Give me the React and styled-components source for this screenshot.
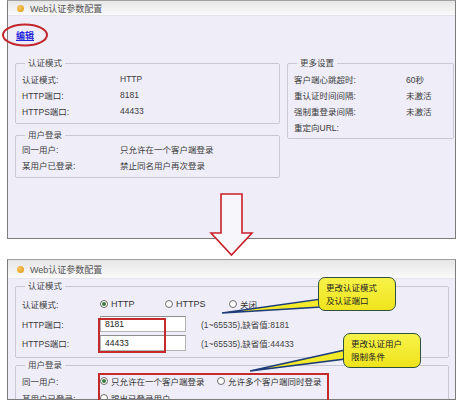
import React from 'react';
import styled, { createGlobalStyle } from 'styled-components';

const GlobalStyle = createGlobalStyle`
  html, body {
    margin: 0;
    padding: 0;
    background: #ffffff;
  }
  body {
    font-family: 'Liberation Sans', 'Noto Sans CJK SC', sans-serif;
    font-size: 8.5px;
    color: #3a3a3a;
  }
`;

const Page = styled.div`
  position: relative;
  width: 458px;
  height: 400px;
  overflow: hidden;
  background: #ffffff;
`;

const Panel = styled.section`
  box-sizing: border-box;
  width: 449px;
  height: ${(p) => p.$h}px;
  margin: ${(p) => p.$top}px 0 0 7px;
  border: 1px solid #7c7c7c;
  border-top-color: #a0a0a0;
  background: #efeef8;
  overflow: hidden;
`;

const TitleBar = styled.div`
  display: flex;
  align-items: center;
  gap: 6px;
  height: ${(p) => p.$h}px;
  padding-left: 9px;
  background: linear-gradient(#e6e6e6, #fafafa);
  border-bottom: 1px solid #e4e4ea;
  color: #555;
  font-size: 9px;
`;

const Dot = styled.span`
  width: 7px;
  height: 7px;
  border-radius: 50%;
  background: radial-gradient(circle at 35% 35%, #f6c45a, #e09a1a);
`;

const Body = styled.div`
  padding: 0 0 0 7px;
`;

const EditRow = styled.div`
  padding-top: 14px;
  height: 12px;
  line-height: 12px;
  padding-left: 1px;
`;

const EditLink = styled.a`
  color: #2424d8;
  text-decoration: underline;
  font-weight: bold;
  font-size: 9px;
`;

const Columns = styled.div`
  display: flex;
  gap: 7px;
  margin-top: ${(p) => p.$mt}px;
  align-items: flex-start;
`;

const Column = styled.div`
  display: flex;
  flex-direction: column;
  width: ${(p) => p.$w}px;
`;

const Group = styled.fieldset`
  box-sizing: border-box;
  width: ${(p) => p.$w || 265}px;
  margin: ${(p) => p.$mt || 0}px 0 0 0;
  padding: ${(p) => p.$pt ?? 2}px 0 ${(p) => p.$pb || 4}px 6px;
  border: 1px solid #c8c8d2;
  border-radius: 2px;
`;

const Legend = styled.legend`
  margin-left: 3px;
  padding: 0 3px;
  height: 12px;
  line-height: 12px;
  color: #444;
  font-size: 8.5px;
`;

const Row = styled.div`
  display: flex;
  align-items: center;
  height: ${(p) => p.$h || 16}px;
`;

const Label = styled.span`
  width: ${(p) => p.$w}px;
  flex-shrink: 0;
  white-space: nowrap;
`;

const Value = styled.span`
  white-space: nowrap;
`;

const RadioItem = styled.label`
  display: flex;
  align-items: center;
  gap: 3px;
  width: ${(p) => p.$w}px;
  white-space: nowrap;
  color: #333;
  font-size: ${(p) => (p.$latin ? 9 : 8.5)}px;
`;

const RadioCircle = styled.span`
  box-sizing: border-box;
  display: flex;
  align-items: center;
  justify-content: center;
  width: 8px;
  height: 8px;
  border-radius: 50%;
  border: 1px solid #6e6e6e;
  background: #fff;
  &::after {
    content: '';
    width: 4px;
    height: 4px;
    border-radius: 50%;
    background: ${(p) => (p.$on ? '#3f7a3f' : 'transparent')};
  }
`;

const TextBox = styled.div`
  box-sizing: border-box;
  width: 86px;
  height: 16px;
  padding-left: 4px;
  line-height: 14px;
  border: 1px solid #b4b4b4;
  border-top-color: #8e8e8e;
  background: #fff;
  color: #222;
  font-size: 8.5px;
`;

const Hint = styled.span`
  margin-left: 15px;
  white-space: nowrap;
  color: #444;
`;

const RedBox = styled.div`
  position: absolute;
  left: ${(p) => p.$x}px;
  top: ${(p) => p.$y}px;
  width: ${(p) => p.$w}px;
  height: ${(p) => p.$h}px;
  border: 2px solid #c42a2a;
  box-sizing: border-box;
`;

const Callout = styled.div`
  position: absolute;
  box-sizing: border-box;
  left: ${(p) => p.$x}px;
  top: ${(p) => p.$y}px;
  width: ${(p) => p.$w}px;
  height: ${(p) => p.$h}px;
  padding: 4px 0 0 7px;
  border: 1.5px solid #30503c;
  border-radius: 7px;
  background: linear-gradient(#f7f24a, #efe41c);
  color: #222;
  font-size: 8.5px;
  line-height: 13px;
`;

const Overlay = styled.svg`
  position: absolute;
  left: 0;
  top: 0;
  pointer-events: none;
`;

const Radio = ({ on, w, latin, children }) => (
  <RadioItem $w={w} $latin={latin}>
    <RadioCircle $on={on} />
    {children}
  </RadioItem>
);

const topMode = [
  ['认证模式:', 'HTTP'],
  ['HTTP端口:', '8181'],
  ['HTTPS端口:', '44433'],
];

const topLogin = [
  ['同一用户:', '只允许在一个客户端登录'],
  ['某用户已登录:', '禁止同名用户再次登录'],
];

const more = [
  ['客户端心跳超时:', '60秒'],
  ['重认证时间间隔:', '未激活'],
  ['强制重登录间隔:', '未激活'],
  ['重定向URL:', ''],
];

export default function App() {
  return (
    <>
      <GlobalStyle />
      <Page>
        <Panel $h={239} $top={0}>
          <TitleBar $h={14}>
            <Dot />
            Web认证参数配置
          </TitleBar>
          <Body>
            <EditRow>
              <EditLink href="#">编辑</EditLink>
            </EditRow>
            <Columns $mt={15}>
              <Column $w={265}>
                <Group>
                  <Legend>认证模式</Legend>
                  {topMode.map(([k, v]) => (
                    <Row key={k}>
                      <Label $w={98}>{k}</Label>
                      <Value>{v}</Value>
                    </Row>
                  ))}
                </Group>
                <Group $mt={5} $pt={0}>
                  <Legend>用户登录</Legend>
                  {topLogin.map(([k, v]) => (
                    <Row key={k}>
                      <Label $w={98}>{k}</Label>
                      <Value>{v}</Value>
                    </Row>
                  ))}
                </Group>
              </Column>
              <Column $w={167}>
                <Group $w={167} $pb={3}>
                  <Legend>更多设置</Legend>
                  {more.map(([k, v]) => (
                    <Row key={k}>
                      <Label $w={112}>{k}</Label>
                      <Value>{v}</Value>
                    </Row>
                  ))}
                </Group>
              </Column>
            </Columns>
          </Body>
        </Panel>

        <Panel $h={141} $top={20}>
          <TitleBar $h={18}>
            <Dot />
            Web认证参数配置
          </TitleBar>
          <Body>
            <Group $w={434} $mt={1} $pb={5}>
              <Legend>认证模式</Legend>
              <Row $h={20}>
                <Label $w={78}>认证模式:</Label>
                <Radio on w={65} latin>HTTP</Radio>
                <Radio w={64} latin>HTTPS</Radio>
                <Radio w={40}>关闭</Radio>
              </Row>
              <Row $h={19}>
                <Label $w={78}>HTTP端口:</Label>
                <TextBox>8181</TextBox>
                <Hint>(1~65535),缺省值:8181</Hint>
              </Row>
              <Row $h={19}>
                <Label $w={78}>HTTPS端口:</Label>
                <TextBox>44433</TextBox>
                <Hint>(1~65535),缺省值:44433</Hint>
              </Row>
            </Group>
            <Group $w={434} $mt={1} $pt={0}>
              <Legend>用户登录</Legend>
              <Row $h={19}>
                <Label $w={78}>同一用户:</Label>
                <Radio on w={117}>只允许在一个客户端登录</Radio>
                <Radio w={120}>允许多个客户端同时登录</Radio>
              </Row>
              <Row $h={16}>
                <Label $w={78}>某用户已登录:</Label>
                <Radio w={117}>踢出已登录用户</Radio>
              </Row>
            </Group>
          </Body>
        </Panel>

        <RedBox $x={98} $y={318} $w={68} $h={35} />
        <RedBox $x={98} $y={373} $w={231} $h={40} />

        <Overlay width="458" height="400" viewBox="0 0 458 400">
          <ellipse cx="25" cy="35" rx="22" ry="10.5" fill="none" stroke="#c3262c" strokeWidth="2" />
          <polygon
            points="221,194 242,194 242,233 252,233 231.5,255 211,233 221,233"
            fill="#f7f7fb"
            stroke="#c8202a"
            strokeWidth="1.6"
            strokeLinejoin="miter"
          />
          <polygon points="222,313 321,299 321,307" fill="#f2ea2a" stroke="#1d3c78" strokeWidth="1.5" />
          <polygon points="250,371 345,350 345,359" fill="#f2ea2a" stroke="#1d3c78" strokeWidth="1.5" />
        </Overlay>

        <Callout $x={318} $y={277} $w={78} $h={34}>
          更改认证模式
          <br />
          及认证端口
        </Callout>
        <Callout $x={343} $y={333} $w={78} $h={35}>
          更改认证用户
          <br />
          限制条件
        </Callout>
      </Page>
    </>
  );
}
